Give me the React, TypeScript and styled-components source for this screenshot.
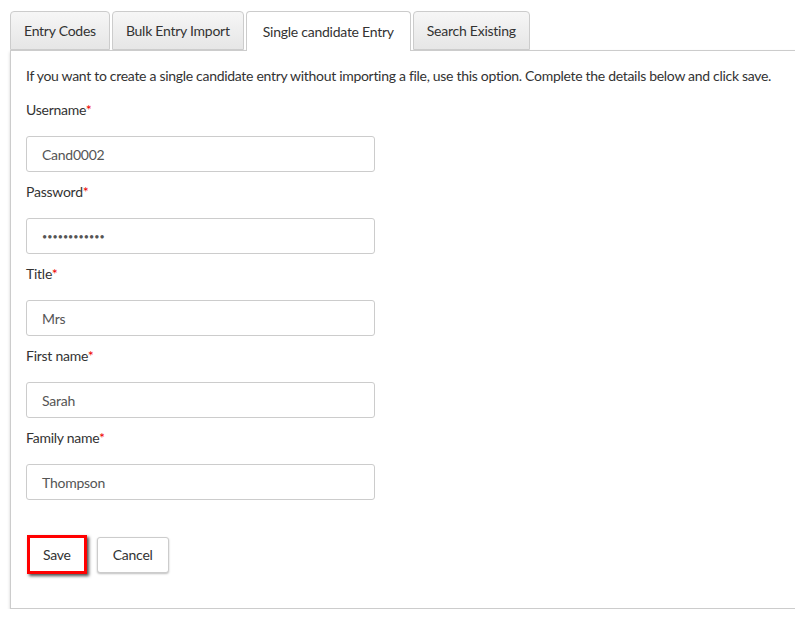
import React from "react";
import styled, { createGlobalStyle } from "styled-components";

const Global = createGlobalStyle`
  html, body { margin: 0; padding: 0; background: #fff; overflow: hidden; }
  body { font-family: "Lato", "Liberation Sans", sans-serif; color: #333; letter-spacing: -0.25px; }
`;

const Page = styled.div`
  padding: 11px 0 0 10px;
  width: 820px;
`;

const TabBar = styled.div`
  display: flex;
  gap: 2px;
  height: 40px;
  position: relative;
  z-index: 1;
`;

const Tab = styled.div<{ $active?: boolean }>`
  box-sizing: border-box;
  height: ${(p) => (p.$active ? "40px" : "39px")};
  padding: ${(p) => (p.$active ? "0 16px" : "0 13px")};
  display: flex;
  align-items: center;
  font-size: 14px;
  color: #333;
  border: 1px solid #ccc;
  border-bottom: ${(p) => (p.$active ? "none" : "1px solid #ccc")};
  border-radius: 4px 4px 0 0;
  background: ${(p) => (p.$active ? "#fff" : "linear-gradient(#f6f6f6, #e6e6e6)")};
`;

const Panel = styled.div`
  margin-top: -1px;
  border: 1px solid #ccc;
  border-right: none;
  padding: 15px 16px 34px 15px;
  box-shadow: 0 2px 3px rgba(0, 0, 0, 0.18);
`;

const Intro = styled.p`
  margin: 0 0 14px;
  font-size: 14px;
  line-height: 20px;
  letter-spacing: -0.3px;
`;

const Field = styled.div`
  display: flex;
  flex-direction: column;
  margin-bottom: 10px;
`;

const Label = styled.label`
  font-size: 14px;
  line-height: 20px;
  margin-bottom: 16px;
`;

const Req = styled.span`
  color: #e00;
`;

const Input = styled.div`
  box-sizing: border-box;
  width: 349px;
  height: 36px;
  border: 1px solid #ccc;
  border-radius: 3px;
  padding: 0 15px;
  display: flex;
  align-items: center;
  font-size: 14px;
  color: #555;
`;

const Dots = styled.span`
  font-size: 9px;
  letter-spacing: 0px;
  color: #555;
`;

const Actions = styled.div`
  display: flex;
  align-items: center;
  gap: 10px;
  margin-top: 35px;
  padding-left: 1px;
`;

const Button = styled.button<{ $highlight?: boolean }>`
  box-sizing: border-box;
  font-family: inherit;
  letter-spacing: inherit;
  font-size: 14px;
  color: #333;
  background: #fff;
  height: ${(p) => (p.$highlight ? "39px" : "36px")};
  padding: ${(p) => (p.$highlight ? "0 13px" : "0 15px")};
  border: ${(p) => (p.$highlight ? "3px solid #f00" : "1px solid #ccc")};
  border-radius: ${(p) => (p.$highlight ? "0" : "3px")};
  box-shadow: ${(p) =>
    p.$highlight ? "2px 2px 3px rgba(0,0,0,0.7)" : "0 1px 2px rgba(0,0,0,0.25)"};
`;

const fields = [
  { label: "Username", value: "Cand0002" },
  { label: "Password", value: "••••••••••••", password: true },
  { label: "Title", value: "Mrs" },
  { label: "First name", value: "Sarah" },
  { label: "Family name", value: "Thompson" },
];

export default function App() {
  return (
    <>
      <Global />
      <Page>
        <TabBar>
          <Tab>Entry Codes</Tab>
          <Tab>Bulk Entry Import</Tab>
          <Tab $active>Single candidate Entry</Tab>
          <Tab>Search Existing</Tab>
        </TabBar>
        <Panel>
          <Intro>
            If you want to create a single candidate entry without importing a file, use this
            option. Complete the details below and click save.
          </Intro>
          {fields.map((f) => (
            <Field key={f.label}>
              <Label>
                {f.label}
                <Req>*</Req>
              </Label>
              <Input>{f.password ? <Dots>{f.value}</Dots> : f.value}</Input>
            </Field>
          ))}
          <Actions>
            <Button $highlight>Save</Button>
            <Button>Cancel</Button>
          </Actions>
        </Panel>
      </Page>
    </>
  );
}
